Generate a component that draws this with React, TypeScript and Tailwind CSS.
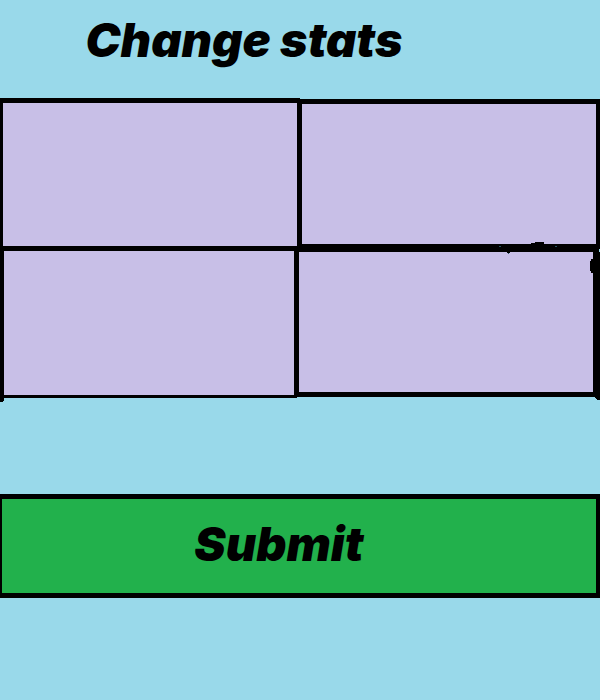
const cell =
  "block w-full min-w-0 rounded-none border-solid border-black bg-[#c8bfe7] px-3 text-2xl outline-none";

/* Ink blots and corner overruns of the hand-drawn grid lines */
function InkMarks() {
  return (
    <>
      <svg
        className="pointer-events-none absolute right-0 top-0"
        width="110"
        height="304"
        viewBox="490 98 110 304"
        shapeRendering="crispEdges"
        aria-hidden="true"
      >
        <path d="M531 244v-1h4v-1h9v2zM507 252h3v1h-3zM593 259h-2v2h-1v10h1v2h2zM593 395h7v5h-3v-1h-1v-1h-1v-1h-2z" />
        <path fill="#27545f" d="M499 246h2v1h-2zM555 246h2v1h-2zM508 253h1v1h-1z" />
        <path fill="#99d9ea" d="M599 249h1v3h-1z" />
      </svg>
      <svg
        className="pointer-events-none absolute left-0 top-[297px]"
        width="4"
        height="7"
        viewBox="0 0 4 7"
        shapeRendering="crispEdges"
        aria-hidden="true"
      >
        <path d="M0 0h4v6h-1v1h-3z" />
      </svg>
    </>
  );
}

export default function App() {
  return (
    <main className="min-h-screen bg-[#99d9ea] font-[Inter,'Open_Sans',sans-serif] text-black">
      <form onSubmit={(event) => event.preventDefault()}>
        <h1 className="h-[98px] pr-28 pt-2.5 text-center text-[47px]/[60px] font-black italic">
          Change stats
        </h1>

        <div className="relative">
          <div className="grid grid-cols-2 items-start">
            <input aria-label="Stat 1" className={`${cell} h-[151px] border-t-5 border-r-3 border-b-3 border-l-3`} />
            <input aria-label="Stat 2" className={`${cell} mt-px h-[150px] border-t-5 border-r-4 border-b-5 border-l-2`} />
          </div>
          <div className="grid grid-cols-[99fr_101fr] items-start">
            <input aria-label="Stat 3" className={`${cell} h-[149px] border-t-2 border-r-3 border-b-3 border-l-4`} />
            <input aria-label="Stat 4" className={`${cell} h-[148px] border-t-3 border-r-7 border-b-5 border-l-2`} />
          </div>
          <InkMarks />
        </div>

        <button
          type="submit"
          className="mt-24 block h-[104px] w-full border-y-5 border-l-2 border-r-4 border-black bg-[#22b14c] pb-1 pr-10 text-[47px]/[60px] font-black italic"
        >
          Submit
        </button>
      </form>
    </main>
  );
}
